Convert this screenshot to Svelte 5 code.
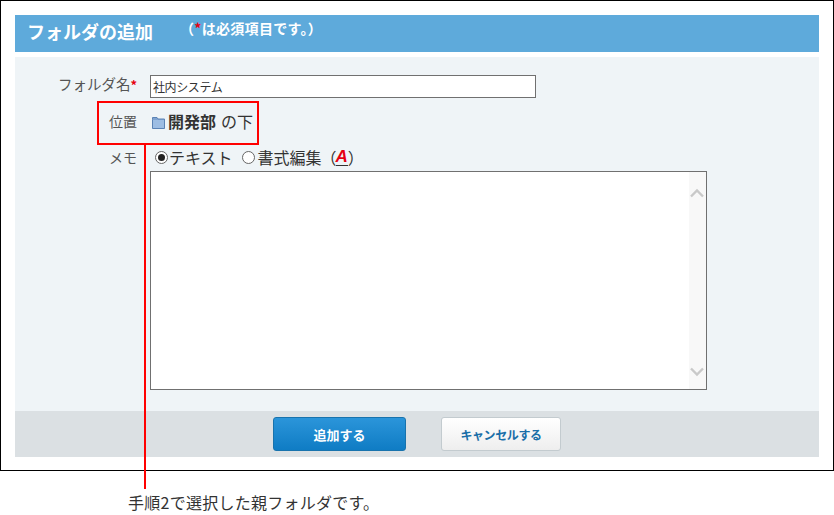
<script lang="ts">
  let folderName = $state('社内システム');
  let memoType = $state('text');
</script>

<div class="page">
  <div class="frame">
    <header class="title">
      <h1>フォルダの追加</h1>
      <p>（<span class="req">*</span>は必須項目です。）</p>
    </header>

    <form class="panel" onsubmit={(e) => e.preventDefault()}>
      <div class="fields">
        <div class="row name">
          <span class="label big">フォルダ名<span class="req">*</span></span>
          <input type="text" bind:value={folderName} />
        </div>
        <div class="row place">
          <span class="label">位置</span>
          <div class="parent">
            <svg width="13" height="12" viewBox="0 0 13 12" aria-hidden="true">
              <path d="M0.5 2.5 V0.5 H5 L6 2 H12.5 V11.5 H0.5 Z" fill="#7fa3d1" stroke="#5b83b5" />
              <rect x="1" y="3" width="11" height="8" fill="#9dbde3" />
            </svg>
            <strong>開発部</strong>
            <span>の下</span>
          </div>
        </div>
        <div class="row memo">
          <span class="label">メモ</span>
          <div class="memo-type">
            <label>
              <span class="radio" class:on={memoType === 'text'}></span>テキスト
            </label>
            <label>
              <span class="radio" class:on={memoType === 'rich'}></span>書式編集
            </label>
            <span class="paren">（<span class="a-icon">A</span>）</span>
          </div>
        </div>
        <div class="memo-box">
          <div class="scroll">
            <svg width="14" height="10" viewBox="0 0 14 10" aria-hidden="true">
              <path d="M1 8.5 L7 2.5 L13 8.5" fill="none" stroke="#c9c9c9" stroke-width="2.4" />
            </svg>
            <svg width="14" height="10" viewBox="0 0 14 10" aria-hidden="true">
              <path d="M1 1.5 L7 7.5 L13 1.5" fill="none" stroke="#c9c9c9" stroke-width="2.4" />
            </svg>
          </div>
        </div>
      </div>

      <footer class="actions">
        <button type="submit" class="primary">追加する</button>
        <button type="button" class="cancel">キャンセルする</button>
      </footer>
    </form>
  </div>

  <p class="note">手順2で選択した親フォルダです。</p>

  <!-- callout drawn over the form -->
  <div class="callout-box"></div>
  <div class="callout-line"></div>
</div>

<style>
  :global(body) {
    margin: 0;
    background: #fff;
  }

  .page {
    position: relative;
    width: 834px;
    height: 515px;
    overflow: hidden;
    font-family: "Noto Sans CJK JP", "Noto Sans", sans-serif;
    color: #333;
  }

  .frame {
    box-sizing: border-box;
    width: 834px;
    height: 471px;
    border: 1px solid #000;
    padding: 14px 14px 0;
  }

  .title {
    display: flex;
    align-items: flex-start;
    height: 37px;
    background: #5eaadb;
    color: #fff;
    padding-left: 12px;
  }

  h1 {
    margin: 4px 0 0;
    font-size: 18px;
    line-height: 24px;
    font-weight: 700;
  }

  .title p {
    margin: 3px 0 0 27px;
    font-size: 14px;
    line-height: 20px;
    font-weight: 700;
    letter-spacing: 0.3px;
  }

  .req {
    color: #e60012;
    font-weight: 700;
  }

  .panel {
    margin-top: 5px;
    background: #eff4f7;
    height: 400px;
    display: flex;
    flex-direction: column;
  }

  .fields {
    flex: 1;
    padding-top: 18px;
  }

  .row {
    display: flex;
  }

  .label {
    box-sizing: border-box;
    width: 122px;
    text-align: right;
    font-size: 14px;
    color: #555;
    flex: none;
  }

  .label.big {
    font-size: 14.5px;
    line-height: 18px;
  }

  .label .req {
    font-size: 13px;
  }

  .row > :nth-child(2) {
    margin-left: 13px;
  }

  .name {
    height: 23px;
    line-height: 20px;
  }

  input {
    box-sizing: border-box;
    width: 386px;
    height: 23px;
    border: 1px solid #707070;
    background: #fff;
    padding: 0 2px;
    font: inherit;
    font-size: 12px;
    letter-spacing: -0.4px;
    color: #333;
    outline: none;
  }

  .place {
    margin-top: 13px;
    height: 24px;
    line-height: 20px;
  }

  .parent {
    display: flex;
    align-items: center;
    font-size: 16px;
    height: 20px;
  }

  .parent svg {
    margin: 4px 3px 0 2px;
  }

  .parent strong {
    margin-right: 5px;
  }

  .memo {
    margin-top: 10px;
    height: 24px;
    line-height: 24px;
  }

  .memo-type {
    display: flex;
    align-items: center;
    padding-left: 5px;
    font-size: 16px;
  }

  .memo-type label {
    display: flex;
    align-items: center;
    margin-right: 9px;
  }

  .radio {
    box-sizing: border-box;
    width: 13px;
    height: 13px;
    margin-right: 1px;
    border: 1px solid #666;
    border-radius: 50%;
    background: #fff;
    display: flex;
    align-items: center;
    justify-content: center;
  }

  .memo-type label + label .radio {
    margin-right: 3px;
  }

  .radio.on::after {
    content: "";
    width: 7px;
    height: 7px;
    border-radius: 50%;
    background: #222;
  }

  .paren {
    margin-left: -10px;
    display: flex;
    align-items: center;
  }

  .a-icon {
    margin-left: -1px;
    color: #e60012;
    font-family: "Liberation Sans", sans-serif;
    font-weight: 700;
    font-style: italic;
    font-size: 17px;
    line-height: 17px;
    border-bottom: 1px solid #333;
  }

  .memo-box {
    box-sizing: border-box;
    margin: 2px 0 0 135px;
    width: 557px;
    height: 219px;
    border: 1px solid #707070;
    background: #fff;
    display: flex;
    justify-content: flex-end;
  }

  .scroll {
    width: 17px;
    background: #f8f8f8;
    display: flex;
    flex-direction: column;
    align-items: center;
    justify-content: space-between;
    padding: 16px 0 12px;
    box-sizing: border-box;
  }

  .scroll svg {
    margin-right: 1px;
  }

  .actions {
    height: 46px;
    background: #dbe0e3;
    display: flex;
    justify-content: center;
    align-items: flex-start;
    gap: 35px;
    padding: 6px 0 0 0;
    box-sizing: border-box;
  }

  button {
    box-sizing: border-box;
    height: 34px;
    border-radius: 3px;
    font: inherit;
    font-size: 13px;
    font-weight: 700;
    padding: 0;
  }

  .primary {
    width: 133px;
    color: #fff;
    border: 1px solid #1873ad;
    background: linear-gradient(#2b95da, #0f7cc4);
  }

  .cancel {
    width: 120px;
    font-size: 12px;
    letter-spacing: -0.4px;
    color: #1a6ea8;
    border: 1px solid #c3cbcf;
    background: linear-gradient(#fff, #eeeeee);
  }

  .note {
    margin: 0;
    padding: 20px 0 0 128px;
    font-size: 16px;
    line-height: 22px;
    letter-spacing: 0.25px;
    color: #333;
  }

  .callout-box {
    position: absolute;
    left: 97px;
    top: 101px;
    width: 162px;
    height: 44px;
    box-sizing: border-box;
    border: 2px solid #f00;
  }

  .callout-line {
    position: absolute;
    left: 144px;
    top: 145px;
    width: 2px;
    height: 344px;
    background: #f00;
  }
</style>
